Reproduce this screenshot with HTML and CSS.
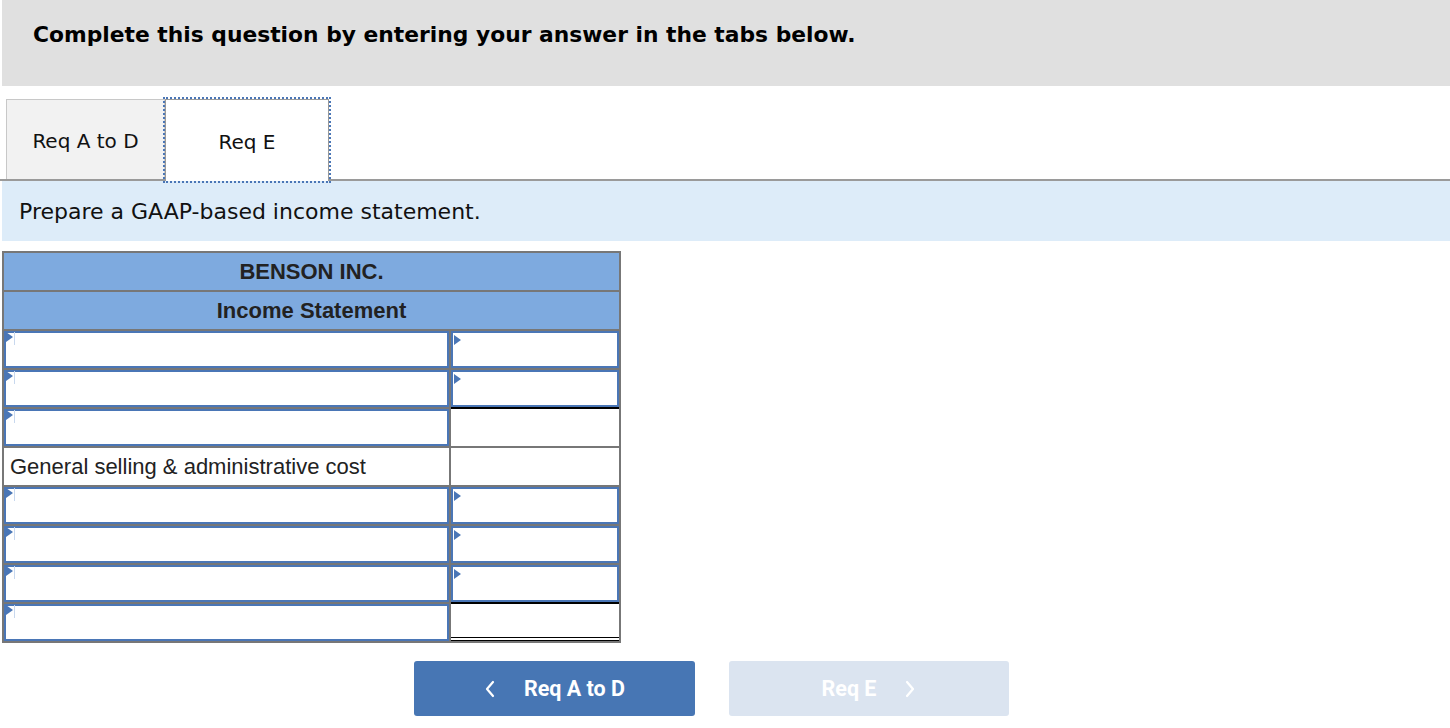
FILE: index.html
```html
<!DOCTYPE html>
<html lang="en">
<head>
<meta charset="utf-8">
<title>Income Statement</title>
<link rel="stylesheet" href="styles.css">
</head>
<body>
<div class="header"><h1 class="header-title">Complete this question by entering your answer in the tabs below.</h1></div>

<div class="tabs">
  <div class="tab tab-inactive">Req A to D</div>
  <div class="tab tab-active">Req E</div>
</div>

<div class="instr">Prepare a GAAP-based income statement.</div>

<div class="stmt">
  <div class="cell head">BENSON INC.</div>
  <div class="cell head">Income Statement</div>

  <div class="cell"><div class="inp"><span class="mark"></span><span class="caret"></span></div></div>
  <div class="cell"><div class="inp"><span class="mark mark-r"></span></div></div>

  <div class="cell"><div class="inp"><span class="mark"></span><span class="caret"></span></div></div>
  <div class="cell"><div class="inp"><span class="mark mark-r"></span></div></div>

  <div class="cell"><div class="inp"><span class="mark"></span><span class="caret"></span></div></div>
  <div class="cell plain top-black"></div>

  <div class="cell plain label">General selling &amp; administrative cost</div>
  <div class="cell plain"></div>

  <div class="cell"><div class="inp"><span class="mark"></span><span class="caret"></span></div></div>
  <div class="cell"><div class="inp"><span class="mark mark-r"></span></div></div>

  <div class="cell"><div class="inp"><span class="mark"></span><span class="caret"></span></div></div>
  <div class="cell"><div class="inp"><span class="mark mark-r"></span></div></div>

  <div class="cell"><div class="inp"><span class="mark"></span><span class="caret"></span></div></div>
  <div class="cell"><div class="inp"><span class="mark mark-r"></span></div></div>

  <div class="cell"><div class="inp"><span class="mark"></span><span class="caret"></span></div></div>
  <div class="cell plain top-black dbl-bottom"></div>
</div>

<div class="nav">
  <button class="btn btn-prev" type="button">
    <svg class="chev" width="12" height="18" viewBox="0 0 12 18"><polyline points="9,2 3,9 9,16" fill="none" stroke="#fff" stroke-width="2.2" stroke-linecap="round" stroke-linejoin="round"/></svg>
    <span class="btn-label">Req A to D</span>
  </button>
  <button class="btn btn-next" type="button">
    <span class="btn-label">Req E</span>
    <svg class="chev" width="12" height="18" viewBox="0 0 12 18"><polyline points="3,2 9,9 3,16" fill="none" stroke="#fff" stroke-width="2.2" stroke-linecap="round" stroke-linejoin="round"/></svg>
  </button>
</div>
</body>
</html>
```

FILE: styles.css
```css
* { box-sizing: border-box; }

body {
  margin: 0;
  background: #fff;
  font-family: "DejaVu Sans", Verdana, sans-serif;
  color: #000;
}

.header {
  margin-left: 2px;
  height: 86px;
  background: #e0e0e0;
  padding: 21px 0 0 31px;
}

.header-title {
  margin: 0;
  font-size: 21.8px;
  line-height: 28px;
  font-weight: bold;
}

.tabs {
  margin-top: 13px;
  padding-left: 6px;
  display: flex;
  border-bottom: 2px solid #9a9a9a;
  height: 82px;
}

.tab {
  height: 80px;
  display: flex;
  align-items: center;
  justify-content: center;
  padding-top: 3px;
  font-size: 20px;
  color: #111;
}

.tab-inactive {
  width: 159px;
  background: #f2f2f2;
  border: 1px solid #c8c8c8;
  border-bottom: none;
}

.tab-active {
  width: 164px;
  background: #fff;
  border: 1px solid #9a9a9a;
  border-bottom: none;
  outline: 2px dotted #4a76b6;
  outline-offset: 0;
  position: relative;
  height: 82px;
}

.instr {
  margin-left: 2px;
  height: 60px;
  background: #ddecf9;
  padding-left: 17px;
  display: flex;
  align-items: center;
  font-size: 22px;
  color: #111;
}

.stmt {
  margin: 10px 0 0 2px;
  width: 619px;
  display: grid;
  grid-template-columns: 445px 168px;
  grid-auto-rows: 37px;
  gap: 2px;
  padding: 2px;
  background: #777;
  font-family: "Liberation Sans", Arial, sans-serif;
}

.cell {
  background: #fff;
  position: relative;
}

.head {
  grid-column: 1 / span 2;
  background: #7eaadf;
  display: flex;
  align-items: center;
  justify-content: center;
  font-weight: bold;
  font-size: 22px;
  color: #222;
}

.inp {
  width: 100%;
  height: 100%;
  border: 2px solid #4a76b6;
  background: #fff;
}

.mark {
  position: absolute;
  left: 2px;
  top: 1px;
  width: 0;
  height: 0;
  border-top: 5px solid transparent;
  border-bottom: 5px solid transparent;
  border-left: 7px solid #4a76b6;
}

.mark-r {
  left: 3px;
  top: 4px;
}

.caret {
  position: absolute;
  left: 10px;
  top: 1px;
  width: 1px;
  height: 13px;
  background: #c8d8ee;
}

.label {
  font-size: 22px;
  line-height: 37px;
  padding-left: 6px;
  color: #222;
  white-space: nowrap;
}

.top-black {
  box-shadow: 0 -2px 0 #000;
}

.dbl-bottom {
  border-bottom: 4px double #000;
}

.nav {
  margin-top: 18px;
  padding-left: 414px;
  display: flex;
  gap: 34px;
}

.btn {
  width: 281px;
  height: 55px;
  border: none;
  border-radius: 3px;
  display: flex;
  align-items: center;
  justify-content: center;
  gap: 28px;
  font-family: Roboto, "Liberation Sans", sans-serif;
  font-weight: bold;
  font-size: 21.5px;
  color: #fff;
  padding: 0;
}

.btn-prev {
  background: #4776b4;
}

.btn-next {
  width: 280px;
  background: #dbe4f0;
}

.chev { display: block; }
```
